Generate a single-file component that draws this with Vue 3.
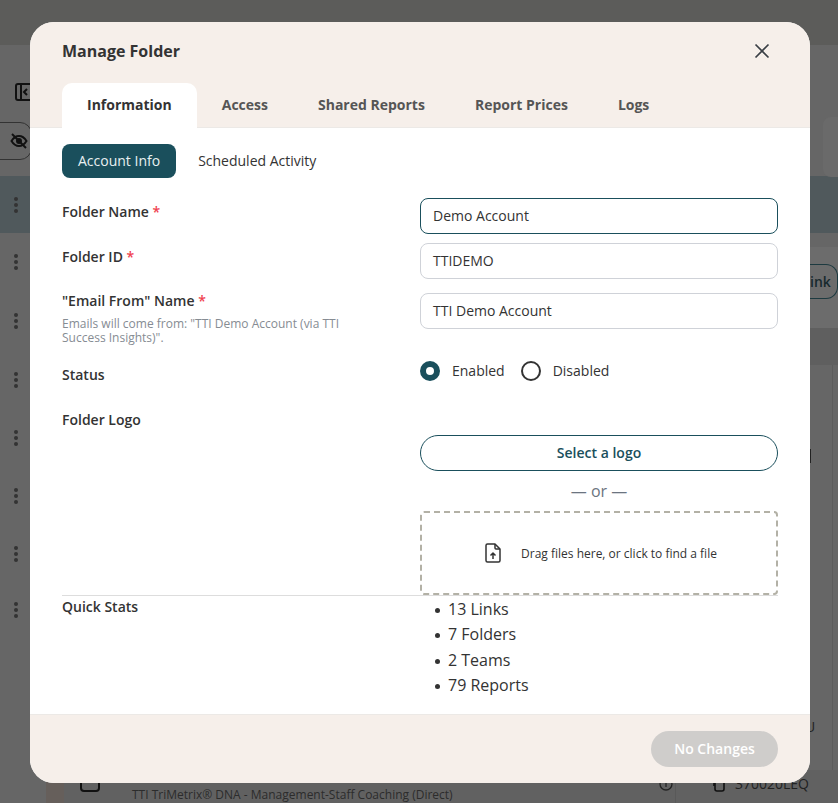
<template>
  <div class="page">
    <!-- dimmed page behind the modal -->
    <div class="backdrop">
      <div class="top-bar"></div>
      <div class="toolbar">
        <svg class="panel-icon" width="18" height="18" viewBox="0 0 18 18" fill="none" stroke="#111" stroke-width="2">
          <rect x="1" y="1" width="16" height="16" rx="2" />
          <path d="M6 1v16M12 6l-3 3 3 3" />
        </svg>
      </div>
      <div class="eye-row">
        <div class="eye-pill">
          <svg width="18" height="18" viewBox="0 0 18 18" fill="none" stroke="#111" stroke-width="2">
            <path d="M1.500 9C4 5 6.500 4 9 4s5 1 7.500 5c-2.500 4-5 5-7.500 5s-5-1-7.500-5z" />
            <circle cx="9" cy="9" r="2" fill="#111" />
            <path d="M2 2l14 14" />
          </svg>
        </div>
      </div>
      <div class="rows">
        <div v-for="(row, i) in dotRows" :key="i" class="dot-row" :class="{ selected: i === 0 }" :style="{ height: row + 'px' }">
          <span class="dots"><i></i><i></i><i></i></span>
        </div>
      </div>

      <div class="right-col">
        <div class="ghost-card"></div>
        <div class="link-strip">
          <div class="link-pill">ink</div>
        </div>
        <div class="table-head"></div>
        <div class="table-rest">
          <span class="peek-bar"></span>
          <span class="peek-letter">U</span>
        </div>
      </div>

      <div class="bottom-row">
        <span class="brown"></span>
        <span class="check"></span>
        <span class="bottom-name">TTI TriMetrix® DNA - Management-Staff Coaching (Direct)</span>
        <svg class="info" width="14" height="14" viewBox="0 0 14 14" fill="none" stroke="#222" stroke-width="1.300">
          <circle cx="7" cy="7" r="6" />
          <path d="M7 6v4" />
        </svg>
        <span class="divider"></span>
        <svg class="copy" width="12" height="18" viewBox="0 0 12 18" fill="none" stroke="#111" stroke-width="1.600">
          <rect x="2" y="5" width="9" height="11" rx="2" />
          <path d="M1 11V3" />
        </svg>
        <span class="bottom-code">370020LEQ</span>
      </div>
    </div>

    <div class="modal">
      <header class="modal-head">
        <div class="title-row">
          <h2 class="modal-title">Manage Folder</h2>
          <svg class="close" width="16" height="16" viewBox="0 0 16 16" fill="none" stroke="#3a3f45" stroke-width="1.700">
            <path d="M1.500 1.500l13 13M14.500 1.500l-13 13" />
          </svg>
        </div>
        <nav class="tabs">
          <a v-for="(tab, i) in tabs" :key="tab" class="tab" :class="{ active: i === 0 }">{{ tab }}</a>
        </nav>
      </header>

      <section class="modal-body">
        <div class="subtabs">
          <span class="subtab on">Account Info</span>
          <span class="subtab">Scheduled Activity</span>
        </div>

        <div class="form-row row-name">
          <label class="lbl">Folder Name <em>*</em></label>
          <div class="field focus">Demo Account</div>
        </div>
        <div class="form-row row-id">
          <label class="lbl">Folder ID <em>*</em></label>
          <div class="field">TTIDEMO</div>
        </div>
        <div class="form-row row-email">
          <div class="email-left">
            <label class="lbl">"Email From" Name <em>*</em></label>
            <p class="hint">Emails will come from: "TTI Demo Account (via TTI Success Insights)".</p>
          </div>
          <div class="field">TTI Demo Account</div>
        </div>
        <div class="form-row row-status">
          <label class="lbl">Status</label>
          <div class="radios">
            <span class="radio checked"></span><span class="radio-text">Enabled</span>
            <span class="radio"></span><span class="radio-text">Disabled</span>
          </div>
        </div>
        <div class="form-row row-logo">
          <label class="lbl">Folder Logo</label>
          <div class="logo-col">
            <button class="select-btn" type="button">Select a logo</button>
            <div class="or">— or —</div>
            <div class="drop">
              <svg width="16" height="20" viewBox="0 0 16 20" fill="none" stroke="#333" stroke-width="1.500" stroke-linejoin="round">
                <path d="M2.500 1h7.500l5 5v11.500a1.500 1.500 0 0 1-1.500 1.500h-11A1.500 1.500 0 0 1 1 17.500v-15A1.500 1.500 0 0 1 2.500 1z" />
                <path d="M10 1v4a1 1 0 0 0 1 1h4" />
                <path d="M8 16v-6M5.500 12.500L8 10l2.500 2.500" />
              </svg>
              <span>Drag files here, or click to find a file</span>
            </div>
          </div>
        </div>
        <div class="form-row row-stats">
          <label class="lbl">Quick Stats</label>
          <ul class="stats">
            <li v-for="s in stats" :key="s">{{ s }}</li>
          </ul>
        </div>
      </section>

      <footer class="modal-foot">
        <button class="save" type="button" disabled>No Changes</button>
      </footer>
    </div>
  </div>
</template>

<script setup>
const tabs = ['Information', 'Access', 'Shared Reports', 'Report Prices', 'Logs']
const stats = ['13 Links', '7 Folders', '2 Teams', '79 Reports']
const dotRows = [57, 58, 59, 59, 58, 58, 58, 54]
</script>

<style>
html, body { margin: 0; background: #666; }
</style>

<style scoped>
.page {
  position: relative;
  width: 838px;
  height: 803px;
  overflow: hidden;
  font-family: "Open Sans", "Liberation Sans", sans-serif;
  color: #333;
  background: #666;
}
.backdrop { width: 100%; height: 100%; position: relative; }
.top-bar { height: 45px; background: #5c5c5a; }
.toolbar { height: 62px; padding: 38px 0 0 15px; box-sizing: border-box; }
.panel-icon { display: block; }
.eye-row { height: 69px; padding-top: 15px; box-sizing: border-box; }
.eye-pill {
  margin-left: -20px;
  width: 52px;
  height: 38px;
  border: 1px solid #333;
  border-radius: 12px;
  display: flex;
  align-items: center;
  justify-content: flex-end;
  padding-right: 3px;
  box-sizing: border-box;
}
.dot-row { width: 100%; display: flex; align-items: center; padding-left: 14px; box-sizing: border-box; }
.dot-row.selected { background: #50595c; }
.dots { display: flex; flex-direction: column; gap: 2px; }
.dots i { width: 4px; height: 4px; border-radius: 50%; background: #333; display: block; }

.right-col {
  position: absolute;
  left: 810px;
  top: 45px;
  width: 28px;
  height: 758px;
  display: flex;
  flex-direction: column;
}
.ghost-card {
  width: 30px;
  height: 60px;
  margin: 72px 0 70px 13px;
  background: #6a6a6a;
  border-radius: 8px;
}
.link-strip {
  height: 81px;
  background: #6c6c6c;
  padding-top: 17px;
  box-sizing: border-box;
}
.link-pill {
  width: 28px;
  height: 35px;
  line-height: 33px;
  box-sizing: border-box;
  border: 1px solid #1d3a40;
  border-left: 0;
  border-radius: 0 12px 12px 0;
  font-size: 14px;
  font-weight: 600;
  color: #16292d;
}
.table-head { width: 100%; height: 37px; background: #5f5f5f; }
.table-rest { flex: 1; width: 22px; border-right: 1px solid #5c5c5c; position: relative; }
.peek-bar { position: absolute; left: 0; top: 84px; width: 1px; height: 14px; background: #222; }
.peek-letter { position: absolute; left: -5px; top: 352px; font-size: 14px; line-height: 20px; color: #222; }

.bottom-row {
  position: absolute;
  left: 46px;
  right: 0;
  top: 770px;
  height: 33px;
  display: flex;
  background: #616161;
}
.brown { width: 18px; background: #665f5b; flex: none; }
.check {
  flex: none;
  margin: 2px 32px 0 16px;
  width: 20px;
  height: 20px;
  border: 2px solid #111;
  border-radius: 4px;
  box-sizing: border-box;
}
.bottom-name {
  flex: none;
  width: 532px;
  padding-top: 15px;
  font-size: 12px;
  line-height: 20px;
  color: #2c2c2c;
  white-space: nowrap;
}
.info { flex: none; margin: 7px 0 0 -5px; }
.divider { flex: none; width: 1px; height: 33px; margin-left: 2px; background: #595959; }
.copy { flex: none; margin: 5px 0 0 37px; }
.bottom-code { flex: none; margin-left: 10px; padding-top: 4px; font-size: 14px; line-height: 20px; color: #222; }

.modal {
  position: absolute;
  left: 30px;
  top: 22px;
  width: 780px;
  height: 761px;
  border-radius: 24px;
  background: #fff;
  overflow: hidden;
  display: flex;
  flex-direction: column;
}
.modal-head {
  background: #f6efea;
  padding: 0 32px;
  height: 106px;
  flex: none;
  box-sizing: border-box;
  border-bottom: 1px solid #ece9e6;
  display: flex;
  flex-direction: column;
  justify-content: space-between;
}
.title-row { display: flex; justify-content: space-between; align-items: center; padding-top: 18px; }
.modal-title { margin: 0; font-size: 16px; line-height: 22px; font-weight: 700; color: #333; }
.close { margin-right: 8px; }
.tabs { display: flex; margin-bottom: -1px; }
.tab {
  height: 45px;
  line-height: 43px;
  box-sizing: border-box;
  padding: 0 25px;
  font-size: 14px;
  font-weight: 700;
  color: #555;
  white-space: nowrap;
}
.tab.active { background: #fff; color: #333; border-radius: 10px 10px 0 0; }

.modal-body { flex: 1; min-height: 0; padding: 16px 32px 0; box-sizing: border-box; }
.subtabs { display: flex; align-items: center; gap: 6px; }
.subtab {
  height: 34px;
  line-height: 34px;
  padding: 0 16px;
  border-radius: 8px;
  font-size: 14px;
  color: #333;
}
.subtab.on { background: #1a4f5c; color: #e8f0f1; }

.form-row { display: grid; grid-template-columns: 1fr 1fr; }
.row-name { margin-top: 20px; height: 45px; }
.row-id { height: 50px; }
.row-email { height: 68px; }
.row-status { height: 49px; }
.row-logo { height: 185px; }
.row-stats { border-top: 1px solid #ddd; padding-top: 1px; }
.lbl { display: block; font-size: 14px; line-height: 20px; font-weight: 600; color: #333; }
.row-name .lbl, .row-id .lbl, .row-status .lbl { padding-top: 4px; }
.email-left { margin-top: -2px; }
.lbl em { font-style: normal; color: #f0424f; }
.hint { margin: 6px 0 0; width: 300px; font-size: 12px; line-height: 14px; color: #868c93; }
.field {
  height: 36px;
  box-sizing: border-box;
  border: 1px solid #cfd2d8;
  border-radius: 8px;
  padding: 0 12px;
  font-size: 14px;
  line-height: 34px;
  color: #333;
}
.field.focus { border-color: #1a4f5c; }
.radios { display: flex; align-items: center; height: 20px; font-size: 14px; color: #333; }
.radio {
  width: 20px;
  height: 20px;
  border-radius: 50%;
  border: 2px solid #333;
  box-sizing: border-box;
  margin-right: 12px;
}
.radio.checked { border: 6px solid #1a4f5c; background: #fff; }
.radio-text { margin-right: 16px; padding-bottom: 2px; }
.logo-col { padding-top: 25px; }
.select-btn {
  display: block;
  width: 100%;
  height: 36px;
  padding-bottom: 3px;
  border: 1px solid #1a4f5c;
  border-radius: 18px;
  background: #fff;
  color: #1a4f5c;
  font: 600 14px "Open Sans", "Liberation Sans", sans-serif;
}
.or { text-align: center; font-size: 16px; line-height: 20px; color: #6b7480; margin: 10px 0; }
.drop {
  height: 84px;
  box-sizing: border-box;
  padding-left: 4px;
  border: 2px dashed #b3b1a6;
  border-radius: 4px;
  display: flex;
  align-items: center;
  justify-content: center;
  gap: 20px;
  font-size: 12px;
  color: #333;
}
.stats { margin: 0; padding: 0 0 0 28px; list-style: none; font-size: 16px; line-height: 25.300px; color: #333; }
.stats li { position: relative; }
.stats li::before {
  content: "";
  position: absolute;
  left: -13px;
  top: 11px;
  width: 5px;
  height: 5px;
  border-radius: 50%;
  background: #333;
}

.modal-foot {
  flex: none;
  height: 69px;
  box-sizing: border-box;
  background: #f6efea;
  border-top: 1px solid #ece9e6;
  padding: 16px 32px 0;
  display: flex;
  justify-content: flex-end;
}
.save {
  width: 127px;
  height: 36px;
  padding-bottom: 3px;
  border: 0;
  border-radius: 18px;
  background: #cfcdcb;
  color: #fff;
  font: 600 14px "Open Sans", "Liberation Sans", sans-serif;
}
</style>
